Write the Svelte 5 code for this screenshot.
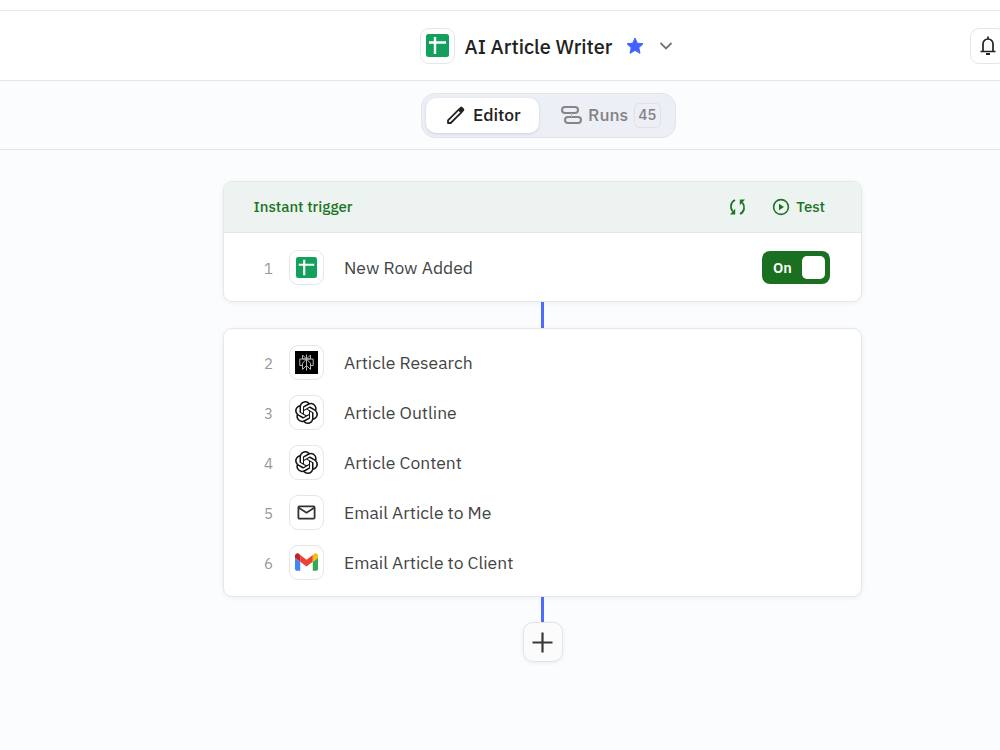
<script lang="ts">
  type App = 'sheets' | 'perplexity' | 'openai' | 'mail' | 'gmail';
  type Step = { id: number; app: App; name: string };

  const trigger: Step = { id: 1, app: 'sheets', name: 'New Row Added' };

  const steps: Step[] = [
    { id: 2, app: 'perplexity', name: 'Article Research' },
    { id: 3, app: 'openai', name: 'Article Outline' },
    { id: 4, app: 'openai', name: 'Article Content' },
    { id: 5, app: 'mail', name: 'Email Article to Me' },
    { id: 6, app: 'gmail', name: 'Email Article to Client' },
  ];

  let tab = $state<'editor' | 'runs'>('editor');
  let enabled = $state(true);
</script>

{#snippet appIcon(app: App, size: number)}
  {#if app === 'sheets'}
    <svg width={size} height={size} viewBox="0 0 23 23">
      <rect width="23" height="23" rx="2.5" fill="#12a05c" />
      <path d="M3 8.5h17M9 3v17" stroke="#fff" stroke-width="2.4" />
    </svg>
  {:else if app === 'perplexity'}
    <svg width="23" height="23" viewBox="0 0 23 23">
      <rect width="23" height="23" fill="#000" />
      <path
        d="M11.5 3.5v16M7.5 4v4h8V4l-4 4zM11.5 8l-4 4.3v6.2l4-4 4 4v-6.2zM7.5 14.5H4.8V8h13.4v6.5h-2.7"
        fill="none"
        stroke="#b5b5b5"
      />
    </svg>
  {:else if app === 'openai'}
    <svg width="23" height="23" viewBox="0 0 24 24">
      <path
        fill="#151515"
        d="M22.2819 9.8211a5.9847 5.9847 0 0 0-.5157-4.9108 6.0462 6.0462 0 0 0-6.5098-2.9A6.0651 6.0651 0 0 0 4.9807 4.1818a5.9847 5.9847 0 0 0-3.9977 2.9 6.0462 6.0462 0 0 0 .7427 7.0966 5.98 5.98 0 0 0 .511 4.9107 6.051 6.051 0 0 0 6.5146 2.9001A5.9847 5.9847 0 0 0 13.2599 24a6.0557 6.0557 0 0 0 5.7718-4.2058 5.9894 5.9894 0 0 0 3.9977-2.9001 6.0557 6.0557 0 0 0-.7475-7.0729zm-9.022 12.6081a4.4755 4.4755 0 0 1-2.8764-1.0408l.1419-.0804 4.7783-2.7582a.7948.7948 0 0 0 .3927-.6813v-6.7369l2.02 1.1686a.071.071 0 0 1 .038.052v5.5826a4.504 4.504 0 0 1-4.4945 4.4944zm-9.6607-4.1254a4.4708 4.4708 0 0 1-.5346-3.0137l.142.0852 4.783 2.7582a.7712.7712 0 0 0 .7806 0l5.8428-3.3685v2.3324a.0804.0804 0 0 1-.0332.0615L9.74 19.9502a4.4992 4.4992 0 0 1-6.1408-1.6464zM2.3408 7.8956a4.485 4.485 0 0 1 2.3655-1.9728V11.6a.7664.7664 0 0 0 .3879.6765l5.8144 3.3543-2.0201 1.1685a.0757.0757 0 0 1-.071 0l-4.8303-2.7865A4.504 4.504 0 0 1 2.3408 7.872zm16.5963 3.8558L13.1038 8.364 15.1192 7.2a.0757.0757 0 0 1 .071 0l4.8303 2.7913a4.4944 4.4944 0 0 1-.6765 8.1042v-5.6772a.79.79 0 0 0-.407-.667zm2.0107-3.0231l-.142-.0852-4.7735-2.7818a.7759.7759 0 0 0-.7854 0L9.409 9.2297V6.8974a.0662.0662 0 0 1 .0284-.0615l4.8303-2.7866a4.4992 4.4992 0 0 1 6.6802 4.66zM8.3065 12.863l-2.02-1.1638a.0804.0804 0 0 1-.038-.0567V6.0742a4.4992 4.4992 0 0 1 7.3757-3.4537l-.142.0805L8.704 5.459a.7948.7948 0 0 0-.3927.6813zm1.0976-2.3654l2.602-1.4998 2.6069 1.4998v2.9994l-2.5974 1.4997-2.6067-1.4997Z"
      />
    </svg>
  {:else if app === 'mail'}
    <svg width="19" height="15" viewBox="0 0 19 15" fill="none" stroke="#333" stroke-width="1.8">
      <rect x="1.4" y="1.4" width="16.2" height="12.2" rx="1" />
      <path d="m1.4 2.6 8.1 5.2 8.1-5.2" />
    </svg>
  {:else}
    <svg width="23" height="18" viewBox="52 42 88 66">
      <path fill="#4285f4" d="M58 108h14V74L52 59v43c0 3.32 2.69 6 6 6" />
      <path fill="#34a853" d="M120 108h14c3.32 0 6-2.69 6-6V59l-20 15" />
      <path fill="#fbbc04" d="M120 48v26l20-15v-8c0-7.42-8.47-11.65-14.4-7.2" />
      <path fill="#ea4335" d="M72 74V48l24 18 24-18v26L96 92" />
      <path fill="#c5221f" d="M52 51v8l20 15V48l-5.6-4.2c-5.94-4.45-14.4-.22-14.4 7.2" />
    </svg>
  {/if}
{/snippet}

{#snippet row(step: Step)}
  <span class="num">{step.id}</span>
  <span class="tile">{@render appIcon(step.app, 21)}</span>
  <span class="name">{step.name}</span>
{/snippet}

<div class="page">
  <div class="topline"></div>

  <header class="header">
    <span class="tile">{@render appIcon('sheets', 23)}</span>
    <h1>AI Article Writer</h1>
    <svg width="20" height="20" viewBox="0 0 20 20">
      <path
        d="M10 2 12.3 7.2l5.7.6-4.2 3.9 1.2 5.6-5-2.9-5 2.9 1.2-5.6L2 7.8l5.7-.6z"
        fill="#4262ff"
        stroke="#4262ff"
        stroke-linejoin="round"
      />
    </svg>
    <svg class="chevron" width="14" height="10" viewBox="0 0 14 10">
      <path d="m1.5 2 5.500 5.500L12.500 2" fill="none" stroke="#70747c" stroke-width="1.8" />
    </svg>
    <button class="tile bell" aria-label="Notifications">
      <svg width="18" height="22" viewBox="0 0 18 22" fill="none" stroke="#222" stroke-width="1.7">
        <path d="M4 16V9a5 5 0 0 1 10 0v7M1.500 16.500h15M9 4V1.500" />
        <path d="M7 19h4" stroke-width="2" />
      </svg>
    </button>
  </header>

  <nav class="tabs-bar">
    <div class="tabs">
      <button class="tab editor" class:active={tab === 'editor'} onclick={() => (tab = 'editor')}>
        <svg width="20" height="20" viewBox="0 0 20 20">
          <path
            d="m2 15.300 10.700-10.700 2.700 2.700L4.700 18H2z"
            fill="none"
            stroke="#222"
            stroke-width="1.8"
            stroke-linejoin="round"
          />
          <path d="m11.800 4.500 2.300-2.300a1.600 1.600 0 0 1 2.300 0l1.400 1.400a1.600 1.600 0 0 1 0 2.300l-2.300 2.300z" fill="#222" />
        </svg>
        <span>Editor</span>
      </button>
      <button class="tab runs" class:active={tab === 'runs'} onclick={() => (tab = 'runs')}>
        <svg width="21" height="18" viewBox="0 0 21 18" fill="none" stroke="#858585" stroke-width="2">
          <rect x="1" y="1" width="16" height="6" rx="3" />
          <rect x="4" y="11" width="16" height="6" rx="3" />
          <path d="M10.500 7v4" stroke-width="1.2" stroke="#b4b5b9" />
        </svg>
        <span>Runs</span>
        <span class="count">45</span>
      </button>
    </div>
  </nav>

  <main class="canvas">
    <section class="card">
      <div class="card-head">
        <span class="label">Instant trigger</span>
        <button aria-label="Refresh">
          <svg width="18" height="18" viewBox="0 0 18 18">
            <path
              d="M7 2C2.300 4.200 1.800 10 4.700 13.500M12 16c4.700-2.200 5.200-8 2.300-11.500"
              fill="none"
              stroke="#1b7422"
              stroke-width="1.8"
            />
            <path d="M7.200 10.800v5.700H2zM11.800 7.200V1.500H17z" fill="#1b7422" />
          </svg>
        </button>
        <button class="test">
          <svg width="18" height="18" viewBox="0 0 18 18">
            <circle cx="9" cy="9" r="7.4" fill="none" stroke="#1b7422" stroke-width="1.6" />
            <path d="M7 5.800v6.400L12 9z" fill="#1b7422" />
          </svg>
          <span>Test</span>
        </button>
      </div>
      <div class="trigger">
        {@render row(trigger)}
        <button
          class="switch"
          class:off={!enabled}
          role="switch"
          aria-checked={enabled}
          onclick={() => (enabled = !enabled)}
        >
          <span>{enabled ? 'On' : 'Off'}</span>
          <i></i>
        </button>
      </div>
    </section>

    <div class="link top"></div>

    <section class="card steps">
      {#each steps as step (step.id)}
        <div class="step">{@render row(step)}</div>
      {/each}
    </section>

    <div class="link"></div>

    <button class="add" aria-label="Add step">
      <svg width="21" height="21" viewBox="0 0 21 21">
        <path d="M10.500 .5v20M.5 10.500h20" stroke="#383838" stroke-width="2.2" />
      </svg>
    </button>
  </main>
</div>

<style>
  :global(body) {
    margin: 0;
  }
  .page {
    width: 1000px;
    height: 750px;
    overflow: hidden;
    display: flex;
    flex-direction: column;
    background: #fbfcfe;
    color: #222;
    font-family: 'IBM Plex Sans', 'Noto Sans', sans-serif;
  }
  button {
    padding: 0;
    border: 0;
    background: none;
    color: inherit;
    font: inherit;
    cursor: pointer;
  }
  svg {
    display: block;
    flex: none;
  }
  .topline {
    height: 10px;
    background: #fff;
    border-bottom: 1px solid #e6e7ea;
  }
  .header {
    height: 69px;
    padding-left: 420px;
    display: flex;
    align-items: center;
    background: #fff;
    border-bottom: 1px solid #e3e5eb;
  }
  .tile {
    box-sizing: border-box;
    flex: none;
    width: 35px;
    height: 35px;
    display: flex;
    align-items: center;
    justify-content: center;
    background: #fff;
    border: 1px solid #e6e6e8;
    border-radius: 9px;
  }
  .header .tile {
    height: 36px;
  }
  h1 {
    flex: none;
    width: 160px;
    margin: 0 0 0 9.5px;
    padding-top: 2px;
    white-space: nowrap;
    font-size: 19.9px;
    font-weight: 500;
    line-height: 26px;
  }
  .chevron {
    margin-left: 14px;
  }
  .header .bell {
    width: 36px;
    margin-left: 297px;
    justify-content: flex-start;
    padding-left: 8px;
  }
  .tabs-bar {
    height: 68px;
    padding-left: 421px;
    display: flex;
    align-items: center;
    border-bottom: 1px solid #e3e5eb;
  }
  .tabs {
    box-sizing: border-box;
    width: 255px;
    height: 45px;
    padding: 4px;
    display: flex;
    background: #edeff7;
    border: 1px solid #e2e4ec;
    border-radius: 14px;
  }
  .tab {
    display: flex;
    align-items: center;
    border-radius: 10px;
    color: #828282;
    font-size: 17.4px;
    line-height: 22px;
    font-weight: 500;
  }
  .tab.active {
    background: #fff;
    color: #222;
    box-shadow: 0 1px 3px rgb(40 50 90 / 16%);
  }
  .tab > span:first-of-type {
    padding-bottom: 1px;
  }
  .editor {
    box-sizing: border-box;
    width: 113px;
    padding-left: 20px;
    gap: 7px;
  }
  .runs {
    padding-left: 22px;
    gap: 6px;
  }
  .runs > span:first-of-type {
    width: 40px;
    text-align: left;
  }
  .count {
    box-sizing: border-box;
    width: 27px;
    height: 25px;
    border: 1px solid #e0e1e6;
    border-radius: 5px;
    font-size: 14.8px;
    line-height: 22px;
    text-align: center;
  }
  .canvas {
    width: 639px;
    margin: 31px 0 0 223px;
    display: flex;
    flex-direction: column;
    align-items: center;
  }
  .card {
    box-sizing: border-box;
    width: 639px;
    overflow: hidden;
    background: #fff;
    border: 1px solid #e6e7e9;
    border-radius: 9px;
    box-shadow: 0 1px 5px rgb(30 40 70 / 6%);
  }
  .card-head {
    height: 50px;
    padding: 0 36px 0 29.5px;
    display: flex;
    align-items: center;
    background: #edf3f1;
    border-bottom: 1px solid #e2e7e5;
    color: #1b7422;
    font-size: 15px;
    line-height: 20px;
    font-weight: 500;
  }
  .label {
    flex: 1;
  }
  .test {
    margin-left: 26px;
    display: flex;
    align-items: center;
    gap: 6px;
  }
  .trigger,
  .step {
    display: flex;
    align-items: center;
    padding: 0 31px 0 40px;
  }
  .trigger {
    height: 67px;
    padding-top: 1px;
  }
  .steps {
    height: 269px;
    padding-top: 8px;
  }
  .step {
    height: 50px;
  }
  .num {
    width: 25px;
    padding-top: 2px;
    color: #999;
    font-size: 15px;
  }
  .name {
    flex: 1;
    margin-left: 20px;
    color: #444;
    font-size: 17.5px;
    white-space: nowrap;
  }
  .switch {
    box-sizing: border-box;
    width: 68px;
    height: 33px;
    padding: 0 5px 0 11px;
    display: flex;
    align-items: center;
    justify-content: space-between;
    border-radius: 8px;
    background: #1b6f20;
    color: #fff;
    font-size: 14.5px;
    font-weight: 600;
  }
  .switch.off {
    background: #999;
  }
  .switch i {
    width: 23px;
    height: 23px;
    border-radius: 5px;
    background: #fff;
  }
  .link {
    width: 3px;
    height: 25px;
    background: #4f6bff;
  }
  .link.top {
    height: 26px;
  }
  .add {
    box-sizing: border-box;
    width: 40px;
    height: 40px;
    display: flex;
    align-items: center;
    justify-content: center;
    background: #fbfbfb;
    border: 1px solid #e3e4e7;
    border-radius: 10px;
    box-shadow: 0 1px 4px rgb(30 40 70 / 7%);
  }
</style>
